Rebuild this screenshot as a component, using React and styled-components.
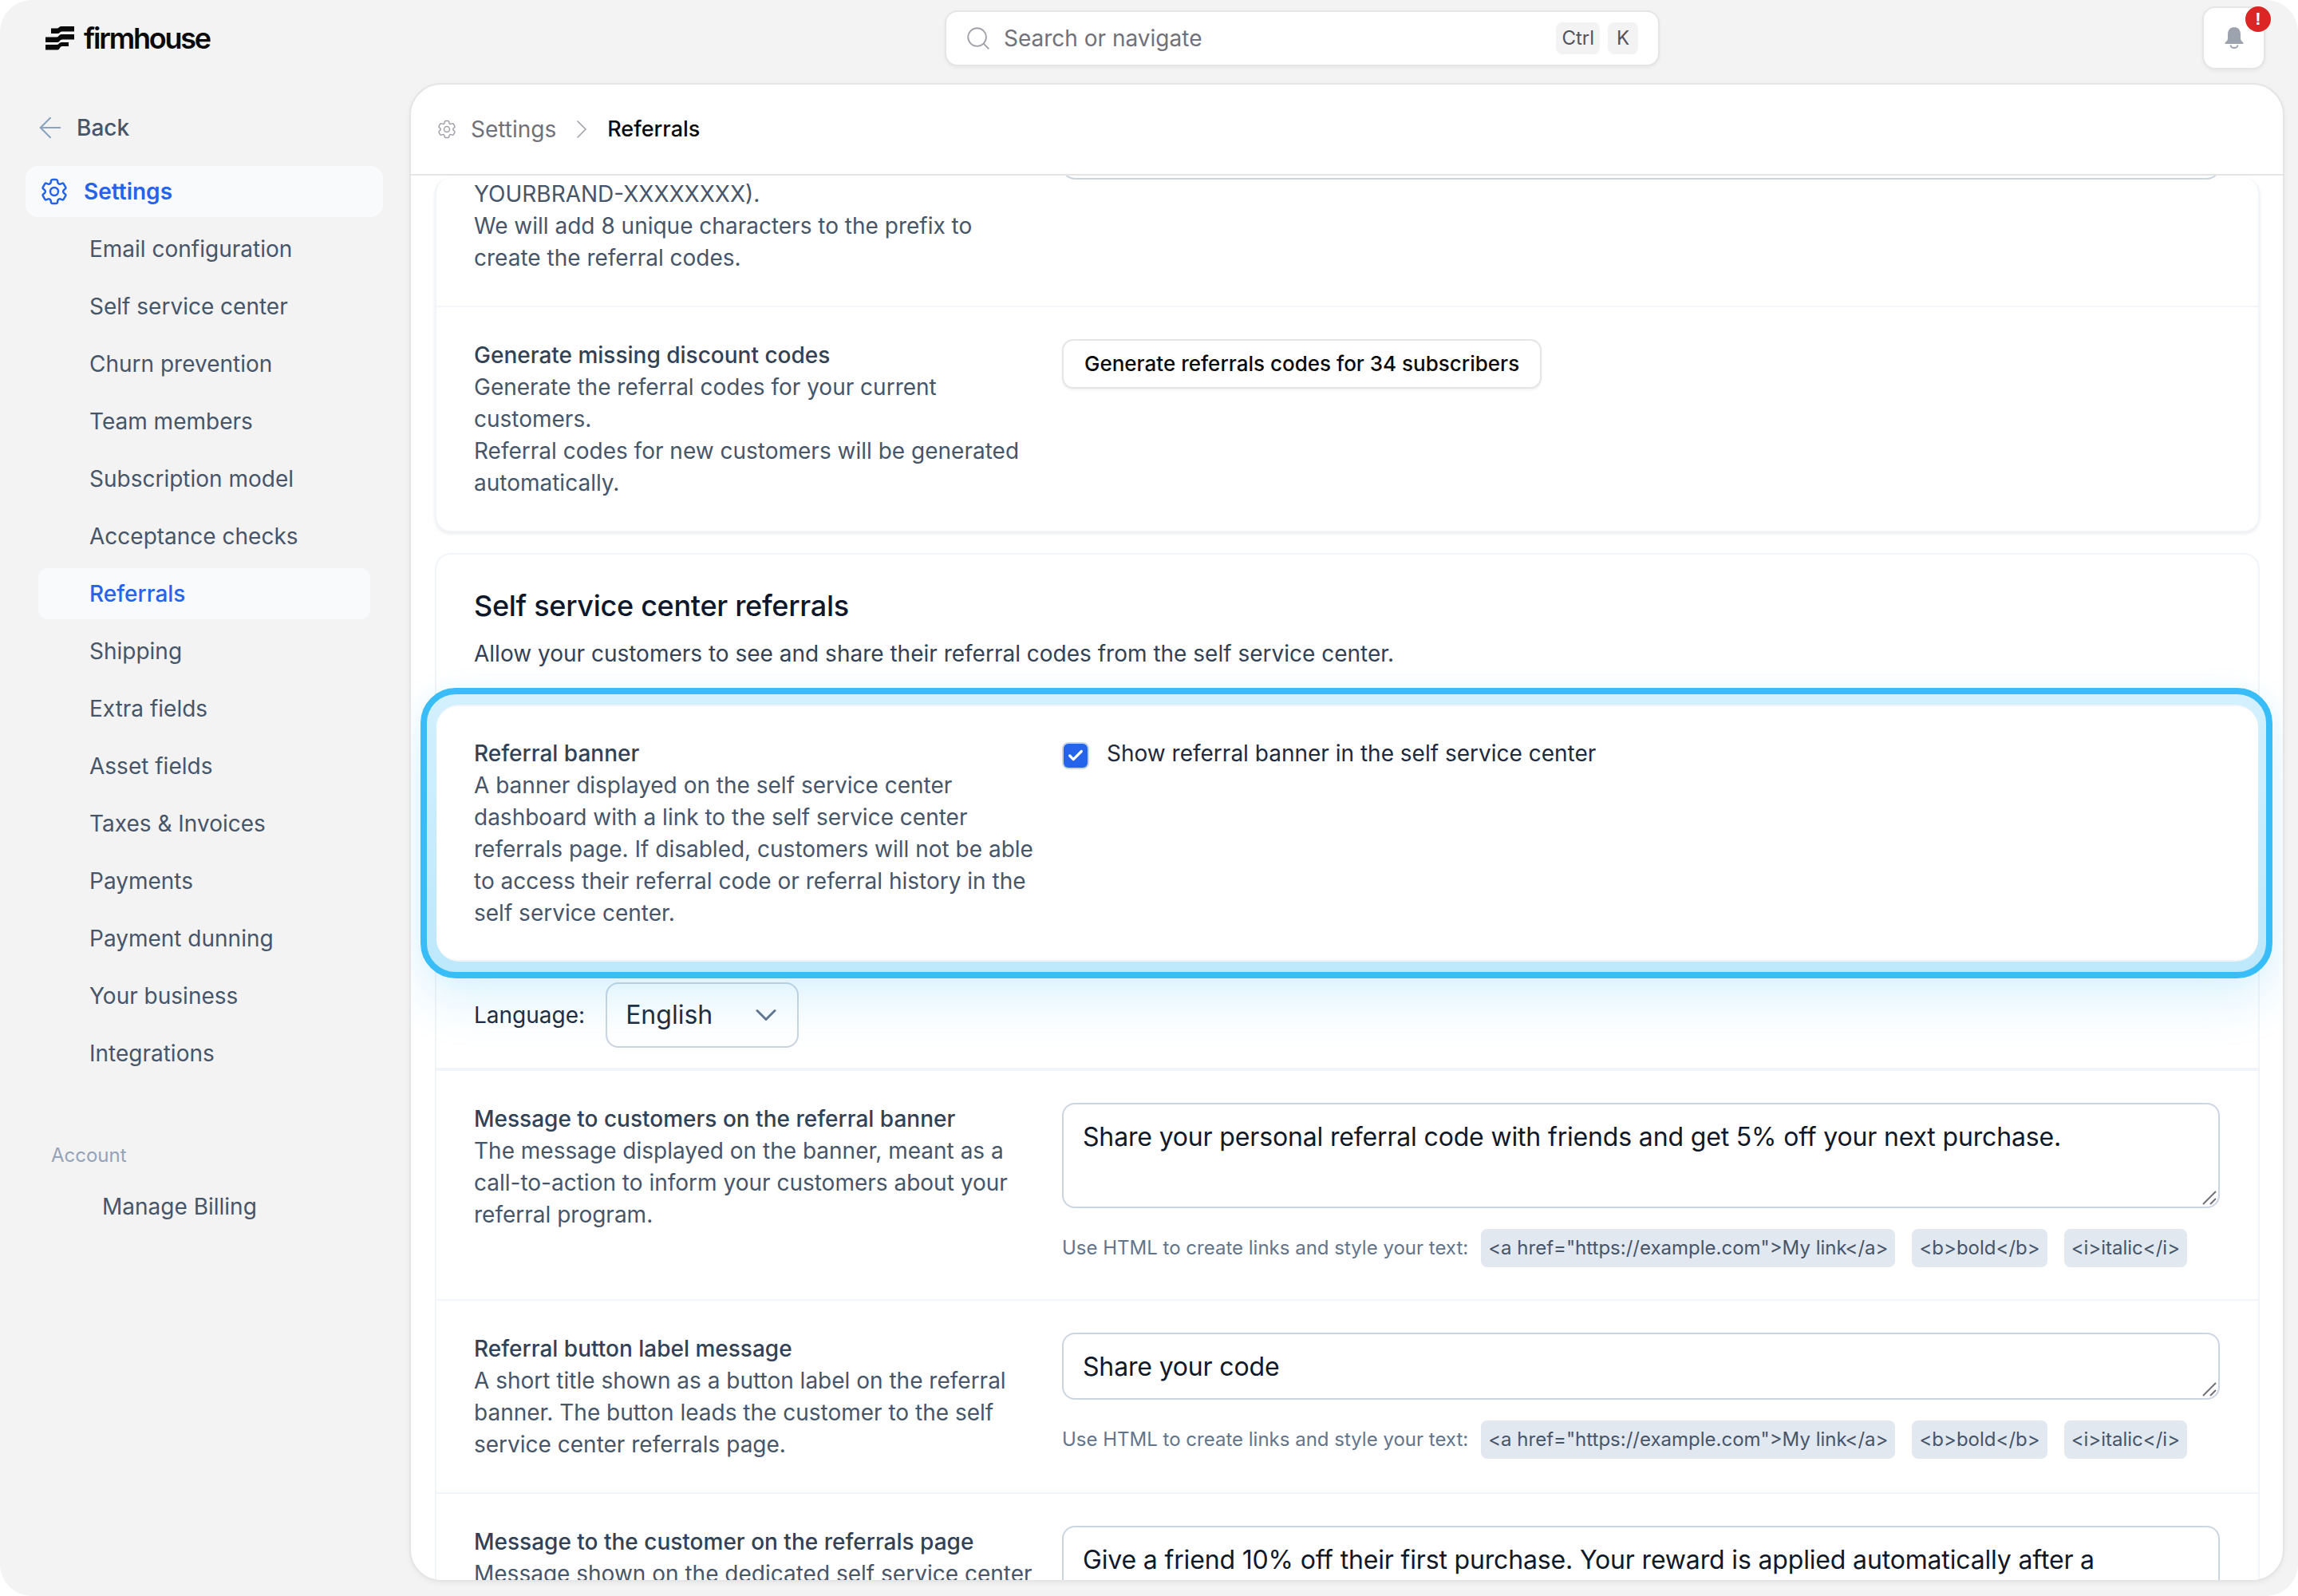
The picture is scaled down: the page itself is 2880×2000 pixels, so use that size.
import React from "react";
import styled, { createGlobalStyle } from "styled-components";
import { ArrowLeft, ChevronRight, ChevronDown, Search, Check } from "lucide-react";
import { HiOutlineCog6Tooth } from "react-icons/hi2";

const GlobalStyle = createGlobalStyle`
  html, body {
    margin: 0;
    background: #fff;
  }
  * {
    box-sizing: border-box;
  }
  body {
    font-family: Inter, "Liberation Sans", sans-serif;
    font-size: 28px;
    line-height: 40px;
  }
`;

const Shell = styled.div`
  position: relative;
  width: 2880px;
  height: 2000px;
  background: #f3f3f3;
  border-radius: 40px;
  overflow: hidden;
  display: grid;
  grid-template-columns: 513px 1fr;
  grid-template-rows: 104px 1fr;
  padding: 0 17px 18px 0;
`;

const TopBar = styled.header`
  grid-column: 1 / 3;
  display: grid;
  grid-template-columns: 1184px 896px 1fr;
  align-items: start;
`;

const Logo = styled.div`
  display: flex;
  align-items: center;
  gap: 11px;
  padding: 30px 0 0 57px;
  font-size: 36px;
  line-height: 36px;
  font-weight: 600;
  letter-spacing: -2.2px;
  color: #0a0a0a;
`;

const SearchBox = styled.div`
  margin-top: 13px;
  height: 70px;
  display: flex;
  align-items: center;
  padding: 0 25px 0 23px;
  background: #fff;
  border: 2px solid #e5e5e5;
  border-radius: 16px;
  box-shadow: 0 2px 4px rgba(0, 0, 0, 0.05);
  color: #71717a;
  svg {
    color: #a1a1aa;
    margin-right: 15px;
  }
`;

const SearchText = styled.span`
  flex: 1;
`;

const Key = styled.kbd`
  margin-left: 10px;
  min-width: 38px;
  height: 40px;
  padding: 0 7px;
  display: inline-flex;
  align-items: center;
  justify-content: center;
  background: #f3f3f3;
  border-radius: 8px;
  font-family: inherit;
  font-size: 24px;
  color: #52525b;
`;

const BellButton = styled.button`
  position: relative;
  justify-self: end;
  margin: 8px 24px 0 0;
  width: 79px;
  height: 79px;
  display: flex;
  align-items: center;
  justify-content: center;
  padding: 0;
  background: #fff;
  border: 2px solid #e5e5e5;
  border-radius: 16px;
  box-shadow: 0 2px 4px rgba(0, 0, 0, 0.05);
`;

const Badge = styled.span`
  position: absolute;
  top: -2px;
  right: -9px;
  width: 32px;
  height: 32px;
  border-radius: 50%;
  background: #dc2626;
  color: #fff;
  font-size: 22px;
  font-weight: 700;
  line-height: 32px;
  text-align: center;
`;

const Side = styled.nav`
  padding: 36px 33px 0 32px;
`;

const BackLink = styled.div`
  display: flex;
  align-items: center;
  height: 40px;
  padding-left: 10px;
  gap: 12px;
  font-weight: 500;
  color: #475569;
  svg {
    color: #8ba3bf;
  }
`;

const SideHead = styled.div`
  margin-top: 28px;
  height: 64px;
  display: flex;
  align-items: center;
  gap: 17px;
  padding-left: 16px;
  border-radius: 16px;
  background: #f8fafc;
  color: #2563eb;
  font-weight: 600;
`;

const SideList = styled.ul`
  list-style: none;
  margin: 8px 0 0;
  padding: 0 16px;
  display: flex;
  flex-direction: column;
  gap: 8px;
`;

const SideItem = styled.li`
  height: 64px;
  display: flex;
  align-items: center;
  padding-left: 64px;
  border-radius: 12px;
  color: ${(p) => (p.$active ? "#2563eb" : "#475569")};
  font-weight: ${(p) => (p.$active ? 500 : 400)};
  background: ${(p) => (p.$active ? "#f8fafc" : "transparent")};
`;

const SideLabel = styled.div`
  margin: 80px 0 0 32px;
  font-size: 24px;
  line-height: 32px;
  color: #94a3b8;
`;

const BillingLink = styled.div`
  margin: 28px 0 0 96px;
  color: #475569;
`;

const Main = styled.main`
  display: flex;
  flex-direction: column;
  min-height: 0;
  background: #fff;
  border: 2px solid #e5e5e5;
  border-radius: 40px;
  box-shadow: 0 2px 6px rgba(0, 0, 0, 0.05);
  overflow: hidden;
`;

const Crumbs = styled.div`
  flex: none;
  height: 114px;
  display: flex;
  align-items: center;
  padding-left: 31px;
  border-bottom: 2px solid #e5e5e5;
  color: #71717a;
  svg {
    color: #a1a1aa;
  }
`;

const CrumbText = styled.span`
  margin-left: 16px;
`;

const CrumbCurrent = styled.span`
  color: #0a0a0a;
  font-size: 27px;
  font-weight: 500;
`;

const CrumbSep = styled.span`
  display: flex;
  margin: 0 12px;
`;

const Scroller = styled.div`
  flex: 1;
  min-height: 0;
  overflow: hidden;
  padding: 3px 29px 0 30px;
  display: flex;
  flex-direction: column;
  gap: 26px;
`;

const Card = styled.section`
  flex: none;
  background: #fff;
  border: 2px solid #f1f5f9;
  border-radius: 20px;
  box-shadow: ${(p) => (p.$raised ? "0 2px 4px rgba(0, 0, 0, 0.08)" : "none")};
  border-top: ${(p) => (p.$cut ? "none" : "2px solid #f1f5f9")};
`;

const CardHead = styled.div`
  padding: 36px 47px 44px;
`;

const CardTitle = styled.h2`
  margin: 0 0 12px;
  font-size: 36px;
  line-height: 56px;
  font-weight: 500;
  letter-spacing: -0.3px;
  color: #0f172a;
`;

const CardIntro = styled.p`
  margin: 0;
  color: #334155;
`;

const Row = styled.div`
  display: grid;
  grid-template-columns: 704px 1fr;
  column-gap: 33px;
  padding: ${(p) => (p.$cut ? "0" : "40px")} 48px 40px 47px;
  border-bottom: ${(p) => (p.$last ? "none" : "2px solid #f1f5f9")};
`;

const Lit = styled.div`
  position: relative;
  z-index: 1;
  &::before {
    content: "";
    position: absolute;
    z-index: -1;
    inset: -21px -18px -21px -20px;
    border: 8px solid #38bdf8;
    border-radius: 44px;
    background: linear-gradient(#d3f0fe, #bde8fb);
    box-shadow: 0 30px 60px rgba(56, 189, 248, 0.16), 0 0 24px rgba(56, 189, 248, 0.06);
  }
`;

const LitBody = styled(Row)`
  background: #fff;
  border: 2px solid #f1f5f9;
  border-width: 2px 0;
  border-radius: 28px;
  padding-top: 39px;
  padding-bottom: 40px;
  height: 322px;
`;

const RowText = styled.div`
  color: #475569;
`;

const RowTitle = styled.div`
  color: #334155;
  font-weight: 500;
`;

const RowLine = styled.div``;

const CutInput = styled.div`
  margin-top: -40px;
  height: 42px;
  background: #fff;
  border: 2px solid #cbd5e1;
  border-top: none;
  border-radius: 16px;
`;

const GenButton = styled.button`
  height: 62px;
  padding: 0 26px;
  background: #fff;
  border: 2px solid #e5e5e5;
  border-radius: 14px;
  box-shadow: 0 2px 3px rgba(0, 0, 0, 0.06);
  font: 500 26px/40px Inter, sans-serif;
  color: #0a0a0a;
`;

const CheckRow = styled.label`
  display: flex;
  align-items: flex-start;
  gap: 24px;
  padding-left: 2px;
  color: #1e293b;
`;

const CheckMark = styled.span`
  margin-top: 8px;
  width: 30px;
  height: 30px;
  display: flex;
  align-items: center;
  justify-content: center;
  background: #2563eb;
  border-radius: 6px;
  box-shadow: 0 0 0 2px #cbd5e1;
  color: #fff;
`;

const LangRow = styled.div`
  height: 137px;
  display: flex;
  align-items: center;
  gap: 26px;
  padding-left: 47px;
  border-bottom: 4px solid #f1f5f9;
  color: #1e293b;
`;

const LangSelect = styled.div`
  width: 242px;
  height: 82px;
  display: flex;
  align-items: center;
  justify-content: space-between;
  padding: 0 17px 0 23px;
  border: 2px solid #cbd5e1;
  border-radius: 16px;
  font-size: 32px;
  color: #1e293b;
  svg {
    color: #64748b;
  }
`;

const Field = styled.div`
  display: flex;
  flex-direction: column;
  min-width: 0;
`;

const TextBox = styled.div`
  position: relative;
  height: ${(p) => p.$h}px;
  padding: 19px 24px;
  border: 2px solid #cbd5e1;
  border-radius: 16px;
  font-size: 32px;
  line-height: 44px;
  letter-spacing: -0.16px;
  color: #111827;
`;

const Grip = styled.svg`
  position: absolute;
  right: 2px;
  bottom: 2px;
  color: #71717a;
`;

const Hint = styled.div`
  margin-top: 26px;
  display: flex;
  align-items: center;
  font-size: 24px;
  color: #64748b;
`;

const HintLabel = styled.span`
  margin-right: 16px;
`;

const Chip = styled.code`
  height: 48px;
  display: inline-flex;
  align-items: center;
  padding: 0 9px;
  margin-right: 21px;
  background: #e2e8f0;
  border-radius: 8px;
  font-family: inherit;
  font-size: 24px;
  color: #475569;
`;

const LogoMark = () => (
  <svg width="37" height="30" viewBox="0 0 37 30" fill="#0a0a0a">
    <path d="M7 2.500H14Q16 2.500 17 1.200 18 0 20 0H36V6.500H21Q19 6.500 18 7.700 17 9 15 9H7Z" />
    <path d="M0 13.500H14Q16 13.500 17 11.500 18 10 20 10H36V16.500H21Q19 16.500 18 18 17 20 15 20H0Z" />
    <path d="M0 23H14Q16 23 17 21.500 18 20 20 20H29V25H21Q19 25 18 27 17 29.500 15 29.500H0Z" />
  </svg>
);

const BellIcon = () => (
  <svg width="24" height="27" viewBox="0 0 24 27" fill="#9ca3af">
    <path d="M12 0C6.500 0 4 4 4 9v5c0 2-1 3.500-3 5-1 .8-.5 2 .8 2h20.400c1.300 0 1.800-1.200.8-2-2-1.500-3-3-3-5V9c0-5-2.500-9-8-9z" />
    <path d="M7.500 22.500a4.500 3.500 0 0 0 9 0" fill="none" stroke="#9ca3af" strokeWidth="2" />
  </svg>
);

const ResizeGrip = () => (
  <Grip width="20" height="20" viewBox="0 0 20 20" fill="none" stroke="currentColor" strokeWidth="2">
    <path d="M3 19 19 3M12 19l7-7" />
  </Grip>
);

const settingsLinks = [
  { label: "Email configuration" },
  { label: "Self service center" },
  { label: "Churn prevention" },
  { label: "Team members" },
  { label: "Subscription model" },
  { label: "Acceptance checks" },
  { label: "Referrals", active: true },
  { label: "Shipping" },
  { label: "Extra fields" },
  { label: "Asset fields" },
  { label: "Taxes & Invoices" },
  { label: "Payments" },
  { label: "Payment dunning" },
  { label: "Your business" },
  { label: "Integrations" },
];

const HtmlHint = () => (
  <Hint>
    <HintLabel>Use HTML to create links and style your text:</HintLabel>
    <Chip>{'<a href="https://example.com">My link</a>'}</Chip>
    <Chip>{"<b>bold</b>"}</Chip>
    <Chip>{"<i>italic</i>"}</Chip>
  </Hint>
);

const RowCopy = ({ title, lines }) => (
  <RowText>
    {title && <RowTitle>{title}</RowTitle>}
    {lines.map((line) => (
      <RowLine key={line}>{line}</RowLine>
    ))}
  </RowText>
);

function App() {
  return (
    <Shell>
      <GlobalStyle />
      <TopBar>
        <Logo>
          <LogoMark />
          firmhouse
        </Logo>
        <SearchBox>
          <Search size={34} strokeWidth={1.3} />
          <SearchText>Search or navigate</SearchText>
          <Key>Ctrl</Key>
          <Key>K</Key>
        </SearchBox>
        <BellButton>
          <BellIcon />
          <Badge>!</Badge>
        </BellButton>
      </TopBar>

      <Side>
        <BackLink>
          <ArrowLeft size={42} strokeWidth={1.2} />
          Back
        </BackLink>
        <SideHead>
          <HiOutlineCog6Tooth size={40} />
          Settings
        </SideHead>
        <SideList>
          {settingsLinks.map((item) => (
            <SideItem key={item.label} $active={item.active}>
              {item.label}
            </SideItem>
          ))}
        </SideList>
        <SideLabel>Account</SideLabel>
        <BillingLink>Manage Billing</BillingLink>
      </Side>

      <Main>
        <Crumbs>
          <HiOutlineCog6Tooth size={28} strokeWidth={1.3} />
          <CrumbText>Settings</CrumbText>
          <CrumbSep>
            <ChevronRight size={40} strokeWidth={1} />
          </CrumbSep>
          <CrumbCurrent>Referrals</CrumbCurrent>
        </Crumbs>
        <Scroller>
          <Card $raised $cut>
            <Row $cut>
              <RowCopy
                lines={[
                  "YOURBRAND-XXXXXXXX).",
                  "We will add 8 unique characters to the prefix to",
                  "create the referral codes.",
                ]}
              />
              <CutInput />
            </Row>
            <Row $last>
              <RowCopy
                title="Generate missing discount codes"
                lines={[
                  "Generate the referral codes for your current",
                  "customers.",
                  "Referral codes for new customers will be generated",
                  "automatically.",
                ]}
              />
              <div>
                <GenButton>Generate referrals codes for 34 subscribers</GenButton>
              </div>
            </Row>
          </Card>

          <Card>
            <CardHead>
              <CardTitle>Self service center referrals</CardTitle>
              <CardIntro>Allow your customers to see and share their referral codes from the self service center.</CardIntro>
            </CardHead>
            <Lit>
              <LitBody $last>
                <RowCopy
                  title="Referral banner"
                  lines={[
                    "A banner displayed on the self service center",
                    "dashboard with a link to the self service center",
                    "referrals page. If disabled, customers will not be able",
                    "to access their referral code or referral history in the",
                    "self service center.",
                  ]}
                />
                <CheckRow>
                  <CheckMark>
                    <Check size={22} strokeWidth={3.5} />
                  </CheckMark>
                  Show referral banner in the self service center
                </CheckRow>
              </LitBody>
            </Lit>
            <LangRow>
              Language:
              <LangSelect>
                English
                <ChevronDown size={44} strokeWidth={1.6} />
              </LangSelect>
            </LangRow>
            <Row>
              <RowCopy
                title="Message to customers on the referral banner"
                lines={[
                  "The message displayed on the banner, meant as a",
                  "call-to-action to inform your customers about your",
                  "referral program.",
                ]}
              />
              <Field>
                <TextBox $h={132}>
                  Share your personal referral code with friends and get 5% off your next purchase.
                  <ResizeGrip />
                </TextBox>
                <HtmlHint />
              </Field>
            </Row>
            <Row>
              <RowCopy
                title="Referral button label message"
                lines={[
                  "A short title shown as a button label on the referral",
                  "banner. The button leads the customer to the self",
                  "service center referrals page.",
                ]}
              />
              <Field>
                <TextBox $h={84}>
                  Share your code
                  <ResizeGrip />
                </TextBox>
                <HtmlHint />
              </Field>
            </Row>
            <Row $last>
              <RowCopy
                title="Message to the customer on the referrals page"
                lines={["Message shown on the dedicated self service center"]}
              />
              <Field>
                <TextBox $h={132}>Give a friend 10% off their first purchase. Your reward is applied automatically after a</TextBox>
              </Field>
            </Row>
          </Card>
        </Scroller>
      </Main>
    </Shell>
  );
}

export default App;
